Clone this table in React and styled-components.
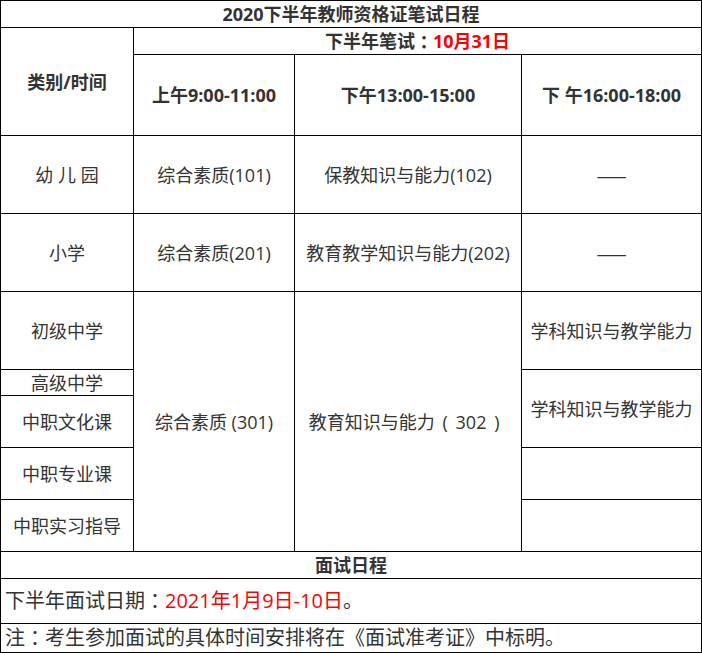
import React from "react";
import styled, { createGlobalStyle } from "styled-components";

const Global = createGlobalStyle`
  html, body { margin: 0; padding: 0; background: #fff; }
  body { font-family: "Open Sans", "Noto Sans CJK SC", sans-serif; }
`;

const Grid = styled.div`
  display: grid;
  width: 702px;
  box-sizing: border-box;
  grid-template-columns: 132px 160px 226px 179px;
  grid-template-rows: 26px 26px 80px 77px 77px 77px 25px 51px 51px 51px 26px 44px 28px;
  gap: 1px;
  padding: 1px;
  background: #000;
`;

const Cell = styled.div`
  grid-column: ${(p) => p.$col || "auto"};
  grid-row: ${(p) => p.$row || "auto"};
  background: #fff;
  display: flex;
  align-items: center;
  justify-content: ${(p) => (p.$left ? "flex-start" : "center")};
  padding-left: ${(p) => (p.$left ? "4px" : "0")};
  font-size: ${(p) => (p.$big ? "20px" : "18px")};
  font-weight: ${(p) => (p.$bold ? 700 : 400)};
  color: #333;
  white-space: nowrap;
  line-height: 1;
`;

const Red = styled.span`
  color: #ff0000;
`;

const Punct = styled.span`
  font-family: "Noto Sans CJK TC", sans-serif;
`;

const Paren = styled.span`
  display: inline-block;
  width: 1.15em;
  text-align: center;
`;

const Dash = styled.span`
  font-family: "Noto Sans CJK SC", sans-serif;
  color: #333;
`;

export default function App() {
  return (
    <>
      <Global />
      <Grid>
        <Cell $col="1 / -1" $row="1" $bold>2020下半年教师资格证笔试日程</Cell>
        <Cell $col="1" $row="2 / 4" $bold>类别/时间</Cell>
        <Cell $col="2 / -1" $row="2" $bold>
          下半年笔试<Punct>：</Punct><Red>10月31日</Red>
        </Cell>
        <Cell $col="2" $row="3" $bold>上午9:00-11:00</Cell>
        <Cell $col="3" $row="3" $bold>下午13:00-15:00</Cell>
        <Cell $col="4" $row="3" $bold>下 午16:00-18:00</Cell>

        <Cell $col="1" $row="4">幼 儿 园</Cell>
        <Cell $col="2" $row="4">综合素质(101)</Cell>
        <Cell $col="3" $row="4">保教知识与能力(102)</Cell>
        <Cell $col="4" $row="4"><Dash>——</Dash></Cell>

        <Cell $col="1" $row="5">小学</Cell>
        <Cell $col="2" $row="5">综合素质(201)</Cell>
        <Cell $col="3" $row="5">教育教学知识与能力(202)</Cell>
        <Cell $col="4" $row="5"><Dash>——</Dash></Cell>

        <Cell $col="1" $row="6">初级中学</Cell>
        <Cell $col="2" $row="6 / 11">综合素质 (301)</Cell>
        <Cell $col="3" $row="6 / 11">
          教育知识与能力<Paren>(</Paren>302<Paren>)</Paren>
        </Cell>
        <Cell $col="4" $row="6">学科知识与教学能力</Cell>

        <Cell $col="1" $row="7">高级中学</Cell>
        <Cell $col="4" $row="7 / 9">学科知识与教学能力</Cell>
        <Cell $col="1" $row="8">中职文化课</Cell>
        <Cell $col="1" $row="9">中职专业课</Cell>
        <Cell $col="4" $row="9" />
        <Cell $col="1" $row="10">中职实习指导</Cell>
        <Cell $col="4" $row="10" />

        <Cell $col="1 / -1" $row="11" $bold>面试日程</Cell>
        <Cell $col="1 / -1" $row="12" $left $big>
          下半年面试日期<Punct>：</Punct><Red>2021年1月9日-10日</Red>。
        </Cell>
        <Cell $col="1 / -1" $row="13" $left $big>
          注<Punct>：</Punct>考生参加面试的具体时间安排将在《面试准考证》中标明。
        </Cell>
      </Grid>
    </>
  );
}
